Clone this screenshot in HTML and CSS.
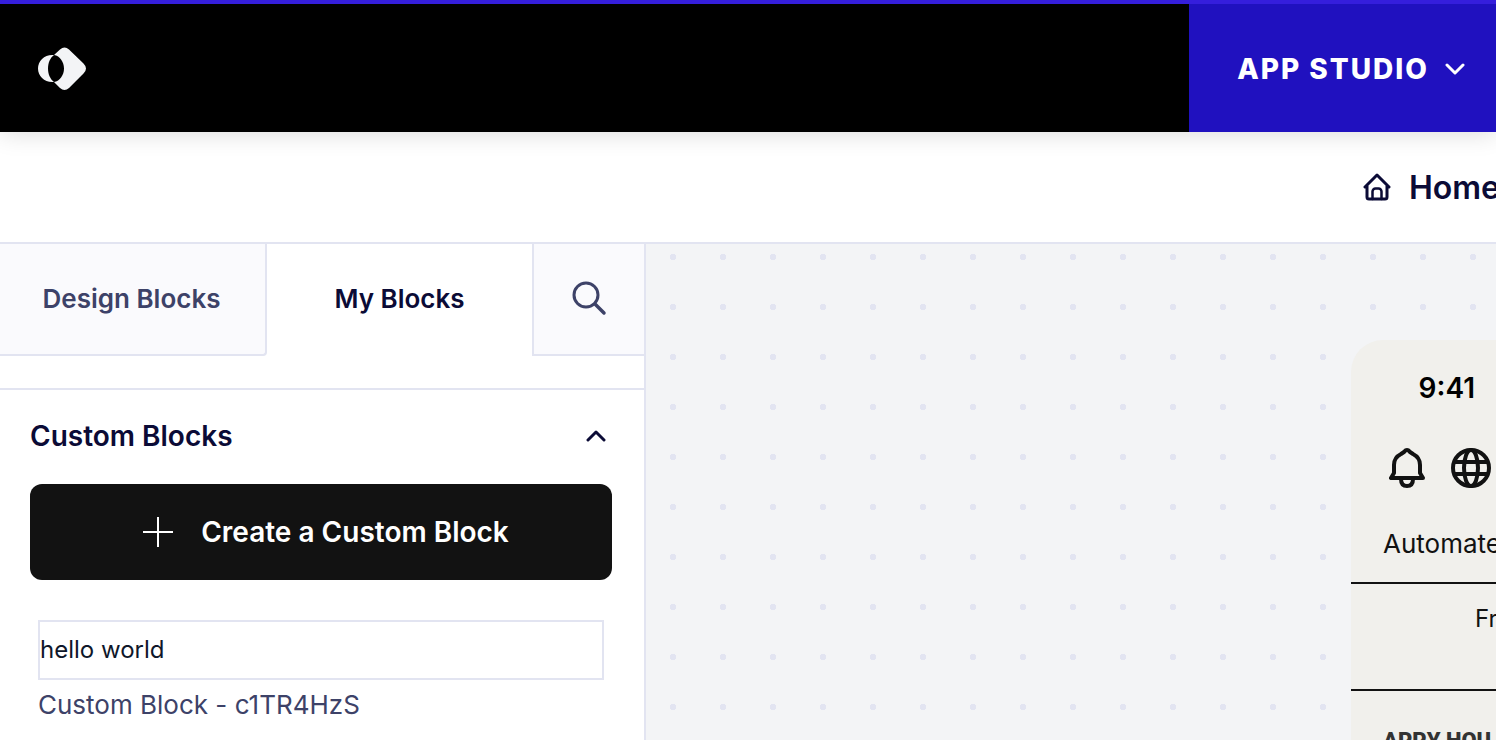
FILE: index.html
```
<!DOCTYPE html>
<html lang="en">
  <head>
    <meta charset="UTF-8" />
    <meta name="viewport" content="width=device-width, initial-scale=1.0" />
    <title>App Studio</title>
    <link rel="stylesheet" href="styles.css">
  </head>
  <body>
    <header class="topbar">
      <a class="logo" href="#" aria-label="Dashboard">
        <svg width="48" height="44" viewBox="0 0 48 44" fill="#f3f4f6">
          <path d="M16 8 L22 2.500 Q26.500 -1.500 31 2.500 L45.500 16.500 Q50.500 21.500 45.500 26.500 L31 41 Q26.500 45 22 41 L16 35 C22 34 26 28 26 21.500 C26 15 22 9 16 8 Z" />
          <path d="M16 8 C12 11 10 16 10 21.500 C10 27 12 32 16 35 C7 36 0 29.500 0 21.500 C0 13.500 7 7 16 8 Z" />
        </svg>
      </a>
      <button class="studio-switch" type="button">
        App Studio
        <svg width="20" height="12" viewBox="0 0 20 12" fill="none" stroke="currentColor" stroke-width="3" stroke-linecap="round" stroke-linejoin="round">
          <path d="M2 2l8 8 8-8" />
        </svg>
      </button>
    </header>

    <nav class="page-nav">
      <a class="page-link" href="#">
        <svg width="28" height="28" viewBox="0 0 28 28" fill="none" stroke="currentColor" stroke-width="3" stroke-linecap="round" stroke-linejoin="round">
          <path d="M2 14L14 2l12 12M4 13v11a2 2 0 0 0 2 2h16a2 2 0 0 0 2-2V13" />
          <path d="M9.500 26V18.500a3 3 0 0 1 3-3h3a3 3 0 0 1 3 3V26" stroke-width="2.500" />
        </svg>
        Home
      </a>
    </nav>

    <main class="editor">
      <aside class="sidebar">
        <div class="tabs">
          <button class="tab" type="button">Design Blocks</button>
          <button class="tab tab-active" type="button">My Blocks</button>
          <button class="tab tab-search" type="button" aria-label="Search blocks">
            <svg width="36" height="36" viewBox="0 0 36 36" fill="none" stroke="currentColor" stroke-width="3" stroke-linecap="round">
              <circle cx="15" cy="15" r="12" />
              <path d="M24 24l9 9" stroke-width="3.500" />
            </svg>
          </button>
        </div>

        <section class="blocks">
          <button class="section-toggle" type="button">
            Custom Blocks
            <svg width="20" height="12" viewBox="0 0 20 12" fill="none" stroke="currentColor" stroke-width="3" stroke-linecap="round" stroke-linejoin="round">
              <path d="M2 10l8-8 8 8" />
            </svg>
          </button>
          <button class="create-button" type="button">
            <svg width="30" height="30" viewBox="0 0 30 30" fill="none" stroke="currentColor" stroke-width="2">
              <path d="M15 0v30M0 15h30" />
            </svg>
            Create a Custom Block
          </button>
          <div class="block-item">
            <input class="block-preview" id="block-preview" type="text" value="hello world" />
            <label class="block-name" for="block-preview">Custom Block - c1TR4HzS</label>
          </div>
        </section>
      </aside>

      <section class="canvas">
        <div class="phone">
          <div class="status-bar">9:41</div>
          <div class="phone-icons">
            <svg width="36" height="42" viewBox="0 0 36 42" fill="none" stroke="currentColor" stroke-width="4" stroke-linecap="round" stroke-linejoin="round">
              <path d="M2 31h32l-3-5V18c0-6-3-9-7-11l-3-2c-1-1-1-2-3-2s-2 1-3 2l-3 2C8 9 5 12 5 18v8z" />
              <path d="M12 32c0 5 2 7 6 7s6-2 6-7" />
            </svg>
            <svg width="40" height="42" viewBox="0 0 40 42" fill="none" stroke="currentColor" stroke-width="4">
              <circle cx="20" cy="21" r="18" />
              <ellipse cx="20" cy="21" rx="7" ry="18" />
              <path d="M3 15h34M3 27h34" />
            </svg>
          </div>
          <p class="phone-intro">Automate</p>
          <p class="phone-banner">Fr</p>
          <h2 class="phone-title">APPY HOU</h2>
        </div>
      </section>
    </main>
  </body>
</html>
```
FILE: styles.css
```
* {
  box-sizing: border-box;
}

body {
  margin: 0;
  height: 100vh;
  display: flex;
  flex-direction: column;
  overflow: hidden;
  font-family: Inter, sans-serif;
  color: #0b0b36;
  background-color: #fff;
}

button {
  font-family: inherit;
  color: inherit;
  border: none;
  background: none;
  cursor: pointer;
}

svg {
  display: block;
  flex-shrink: 0;
}

.topbar {
  display: flex;
  align-items: stretch;
  justify-content: space-between;
  flex-shrink: 0;
  height: 132px;
  border-top: 4px solid #351edc;
  background-color: #000;
  box-shadow: 0 0 24px rgba(0, 0, 0, 0.16);
}

.logo {
  display: flex;
  align-items: center;
  padding: 2px 0 0 38px;
}

.studio-switch {
  display: flex;
  align-items: center;
  gap: 16px;
  padding: 2px 31px 0 48px;
  background-color: #2011bf;
  color: #fff;
  font-size: 28px;
  font-weight: 800;
  letter-spacing: 2px;
  text-transform: uppercase;
}

.page-nav {
  display: flex;
  justify-content: flex-end;
  align-items: center;
  flex-shrink: 0;
  height: 112px;
  border-bottom: 2px solid #e2e4f1;
}

.page-link {
  display: flex;
  align-items: center;
  gap: 18px;
  margin-right: -4px;
  color: inherit;
  font-size: 32px;
  font-weight: 600;
  text-decoration: none;
}

.editor {
  display: flex;
  flex: 1;
  min-height: 0;
}

.sidebar {
  width: 646px;
  flex-shrink: 0;
  border-right: 2px solid #e2e4f1;
}

.tabs {
  display: grid;
  grid-template-columns: 267px 1fr 112px;
  height: 112px;
}

.tab {
  display: flex;
  align-items: center;
  justify-content: center;
  padding: 0 2px 2px 0;
  border-right: 2px solid #e2e4f1;
  border-bottom: 2px solid #e2e4f1;
  border-bottom-right-radius: 4px;
  background-color: #fafafd;
  color: #3d4268;
  font-size: 26px;
  font-weight: 600;
}

.tab-active {
  padding-right: 0;
  border-right: none;
  border-bottom-color: #fff;
  background-color: #fff;
  color: #0b0b36;
}

.tab-search {
  padding-right: 0;
  border-right: none;
  border-left: 2px solid #e2e4f1;
  border-radius: 0;
}

.blocks {
  margin-top: 32px;
  padding: 0 32px 0 30px;
  border-top: 2px solid #e2e4f1;
}

.section-toggle {
  display: flex;
  align-items: center;
  justify-content: space-between;
  width: 100%;
  height: 94px;
  padding: 0 6px 2px 0;
  font-size: 28px;
  font-weight: 600;
}

.create-button {
  display: flex;
  align-items: center;
  justify-content: center;
  gap: 28px;
  width: 100%;
  height: 96px;
  padding: 0 0 0 10px;
  border-radius: 12px;
  background-color: #121212;
  color: #fff;
  font-size: 28px;
  font-weight: 600;
}

.block-item {
  margin-top: 40px;
  padding: 0 8px;
}

.block-preview {
  display: block;
  width: 100%;
  height: 60px;
  padding: 0 0 2px;
  border: 2px solid #e2e4f1;
  color: #0f172a;
  font-family: Inter, sans-serif;
  font-size: 24px;
}

.block-name {
  display: block;
  margin-top: 8px;
  color: #3d4268;
  font-size: 26px;
  line-height: 34px;
}

.canvas {
  display: flex;
  justify-content: flex-end;
  flex: 1;
  min-width: 0;
  padding-top: 96px;
  background-color: #f3f4f6;
  background-image: radial-gradient(circle, #e2e4f1 3px, transparent 3px);
  background-size: 50px 50px;
  background-position: 2px -12px;
}

.phone {
  width: 145px;
  overflow: hidden;
  border-top-left-radius: 32px;
  background-color: #f1f0ec;
  color: #121212;
  white-space: nowrap;
}

.status-bar {
  padding: 32px 21px 0 0;
  color: #000;
  font-size: 28px;
  font-weight: 600;
  line-height: 32px;
  text-align: right;
}

.phone-icons {
  display: flex;
  justify-content: flex-end;
  gap: 26px;
  padding: 43px 5px 0 0;
}

.phone-intro {
  margin: 0;
  padding: 38px 0 21px 32px;
  border-bottom: 2px solid #121212;
  font-size: 26px;
  line-height: 34px;
}

.phone-banner {
  margin: 0;
  height: 107px;
  padding: 18px 0 0 124px;
  border-bottom: 2px solid #121212;
  font-size: 24px;
  line-height: 34px;
}

.phone-title {
  margin: 0;
  padding: 30px 0 0 32px;
  color: #333;
  font-family: Roboto, sans-serif;
  font-size: 22px;
  font-weight: 900;
  line-height: 40px;
}
```
